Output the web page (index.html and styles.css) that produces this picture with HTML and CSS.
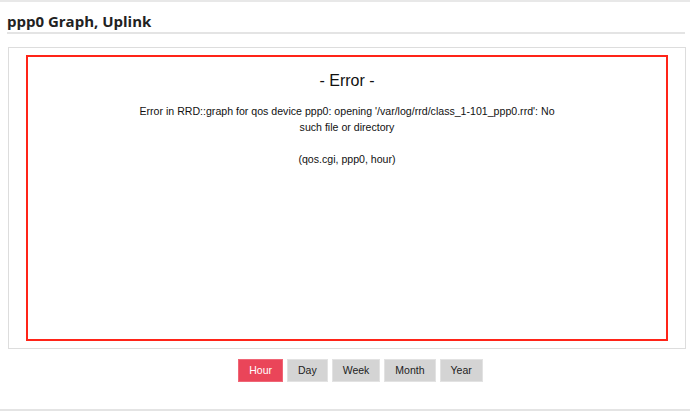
FILE: index.html
```html
<!DOCTYPE html>
<html>
<head>
<meta charset="utf-8">
<link rel="stylesheet" href="styles.css">
</head>
<body>
<div class="topline"></div>
<div class="section">
  <h2 class="title">ppp0 Graph, Uplink</h2>
</div>
<div class="graphbox">
  <div class="errorframe">
    <div class="errhead">- Error -</div>
    <div class="errmsg">Error in RRD::graph for qos device ppp0: opening '/var/log/rrd/class_1-101_ppp0.rrd': No such file or directory</div>
    <div class="errinfo">(qos.cgi, ppp0, hour)</div>
  </div>
</div>
<div class="buttons">
  <span class="btn active">Hour</span>
  <span class="btn">Day</span>
  <span class="btn">Week</span>
  <span class="btn">Month</span>
  <span class="btn">Year</span>
</div>
<div class="bottomline"></div>
</body>
</html>
```

FILE: styles.css
```css
html, body {
  margin: 0;
  padding: 0;
  background: #ffffff;
}
body {
  width: 690px;
  height: 417px;
  overflow: hidden;
  font-family: "Liberation Sans", Arial, sans-serif;
}
.topline {
  height: 2px;
  background: #e8e8e8;
}
.section {
  margin: 0 5px 0 7px;
  border-bottom: 2px solid #e4e4e4;
  height: 30px;
}
.title {
  margin: 0;
  padding-top: 9px;
  font-family: "Open Sans", Lato, sans-serif;
  font-weight: 700;
  font-size: 15px;
  line-height: 20px;
  color: #222222;
}
.graphbox {
  margin: 13px 4px 0 8px;
  border: 1px solid #dddddd;
  padding: 7px 17px;
  height: 286px;
}
.errorframe {
  border: 2px solid #ff2418;
  height: 282px;
  display: flex;
  flex-direction: column;
  align-items: center;
  color: #111111;
}
.errhead {
  margin-top: 14px;
  font-size: 16px;
  line-height: 20px;
}
.errmsg {
  margin-top: 12px;
  width: 440px;
  text-align: center;
  font-size: 10.6px;
  line-height: 16px;
}
.errinfo {
  margin-top: 16px;
  font-size: 10.6px;
  line-height: 16px;
}
.buttons {
  margin-top: 10px;
  display: flex;
  justify-content: center;
  gap: 4px;
  padding-left: 31px;
}
.btn {
  display: inline-block;
  height: 21px;
  line-height: 21px;
  padding: 0 10px;
  background: #d4d4d4;
  border: 1px solid #e2e2e2;
  color: #222222;
  font-family: "Liberation Sans", Arial, sans-serif;
  font-size: 10.5px;
}
.btn.active {
  background: #ea4559;
  border-color: #f06676;
  color: #ffffff;
}
.bottomline {
  margin-top: 27px;
  height: 2px;
  background: #e4e4e4;
}
```
